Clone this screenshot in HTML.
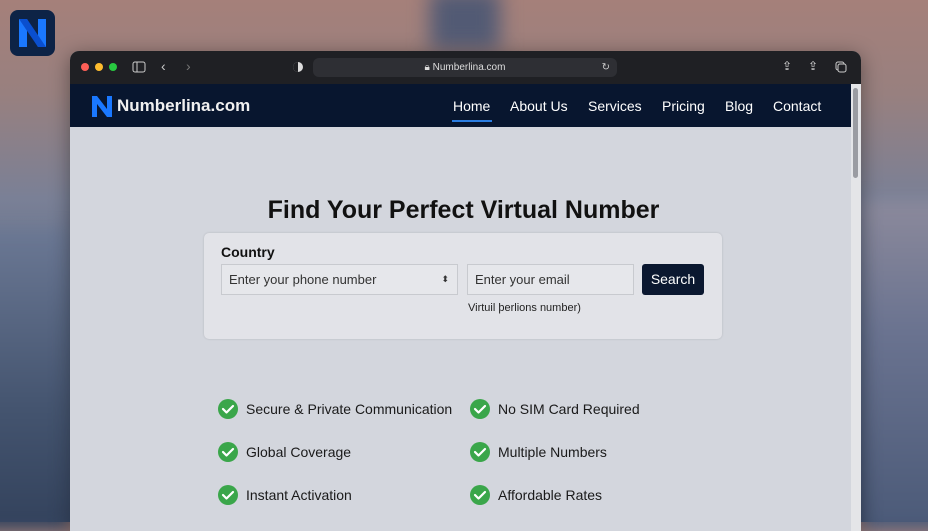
<!DOCTYPE html>
<html><head><meta charset="utf-8"><style>
*{margin:0;padding:0;box-sizing:border-box}
body{width:928px;height:522px;overflow:hidden;position:relative;font-family:"Liberation Sans",sans-serif;
background:linear-gradient(180deg,#a5807a 0%,#98807f 18%,#7a8096 38%,#5d6d8a 60%,#3e4f6e 100%);}
.bgl{position:absolute;left:-20px;top:230px;width:90px;height:300px;background:linear-gradient(180deg,#6b7894,#44546f 60%,#33425c);filter:blur(8px)}
.bgr{position:absolute;left:861px;top:200px;width:90px;height:330px;background:linear-gradient(180deg,#8c8a9c,#6a7390 40%,#4b5a78);filter:blur(8px)}
.tw{position:absolute;left:430px;top:-10px;width:70px;height:60px;background:#525a74;filter:blur(10px)}
.app{position:absolute;left:10px;top:10px;width:45px;height:46px;border-radius:8px;background:#0d2346;}
.win{position:absolute;left:70px;top:51px;width:791px;height:480px;background:#d3d6dd;border-radius:9px 9px 0 0;overflow:hidden;box-shadow:0 4px 20px rgba(0,0,0,.4)}
.tb{height:33px;background:#1f2024;position:relative}
.dot{position:absolute;top:12px;width:8px;height:8px;border-radius:50%}
.url{position:absolute;left:243px;top:7px;width:304px;height:19px;border-radius:6px;background:#2e2f34;color:#ddd;font-size:10px;text-align:center;line-height:19px}
.nav{height:43px;background:#08162f;position:relative;color:#fff}
.nav a{position:absolute;top:14px;font-size:14px;}
.sb{position:absolute;right:0;top:33px;width:10px;height:460px;background:#e4e5e8}
.sb i{position:absolute;left:2px;top:4px;width:5px;height:90px;border-radius:3px;background:#9a9ca2}
h1{position:absolute;left:0;width:787px;text-align:center;top:145px;font-size:25px;color:#111;font-weight:bold}
.card{position:absolute;left:134px;top:182px;width:518px;height:106px;border-radius:5px;background:#e2e3e8;box-shadow:0 0 2px rgba(0,0,0,.15)}
.inp{position:absolute;height:31px;border:1px solid #c8cacf;background:#e6e7eb;font-size:13px;color:#333;line-height:29px;padding-left:7px}
.feat{position:absolute;font-size:14px;color:#1a1a1a}
.ck{position:absolute;width:20px;height:20px;border-radius:50%;background:#3aa64a}
</style></head><body>
<div class="bgl"></div><div class="bgr"></div><div class="tw"></div>
<div class="app"><svg width="45" height="46" viewBox="0 0 45 46"><path d="M9 9h8l11 19V9h8v28h-8L17 18v19H9z" fill="#1a78ff"/><path d="M17 9l19 28h-8L9 9z" fill="#0a4fcf"/></svg></div>
<div class="win">
<div class="tb">
<div class="dot" style="left:11px;background:#fe5f57"></div>
<div class="dot" style="left:25px;background:#febc2e"></div>
<div class="dot" style="left:39px;background:#28c840"></div>
<svg style="position:absolute;left:62px;top:10px" width="14" height="12"><rect x="1" y="1" width="12" height="10" rx="2" fill="none" stroke="#ccc"/><line x1="5" y1="1" x2="5" y2="11" stroke="#ccc"/></svg>
<span style="position:absolute;left:91px;top:7px;color:#ccc;font-size:14px">‹</span>
<span style="position:absolute;left:116px;top:7px;color:#777;font-size:14px">›</span>
<svg style="position:absolute;left:222px;top:10px" width="12" height="12"><circle cx="6" cy="6" r="5" fill="#ddd"/><path d="M6 1a5 5 0 0 0 0 10z" fill="#1f2024"/></svg>
<div class="url">🔒︎ Numberlina.com<span style="position:absolute;right:7px;color:#ccc">↻</span></div>
<span style="position:absolute;left:712px;top:8px;color:#ddd;font-size:12px">⇪</span>
<span style="position:absolute;left:738px;top:8px;color:#ddd;font-size:12px">⇪</span>
<svg style="position:absolute;left:765px;top:10px" width="12" height="12"><rect x="1" y="1" width="8" height="8" rx="2" fill="none" stroke="#ccc"/><rect x="3" y="3" width="8" height="8" rx="2" fill="#1f2024" stroke="#ccc"/></svg>
</div>
<div class="nav">
<svg style="position:absolute;left:22px;top:12px" width="20" height="21" viewBox="0 0 20 21"><path d="M0 0h5l10 13V0h5v21h-5L5 8v13H0z" fill="#1a78ff"/></svg>
<span style="position:absolute;left:47px;top:12px;font-size:17px;font-weight:bold;color:#f0f0f0">Numberlina.com</span>
<a style="left:383px">Home</a><div style="position:absolute;left:382px;top:36px;width:40px;height:2px;background:#2a7de1"></div>
<a style="left:440px">About Us</a><a style="left:518px">Services</a><a style="left:592px">Pricing</a><a style="left:655px">Blog</a><a style="left:703px">Contact</a>
</div>
<div class="sb"><i></i></div>
<h1>Find Your Perfect Virtual Number</h1>
<div class="card">
<div style="position:absolute;left:17px;top:11px;font-size:14px;font-weight:bold;color:#111">Country</div>
<div class="inp" style="left:17px;top:31px;width:237px">Enter your phone number<span style="position:absolute;right:8px;font-size:9px">⬍</span></div>
<div class="inp" style="left:263px;top:31px;width:167px">Enter your email</div>
<div style="position:absolute;left:438px;top:31px;width:62px;height:31px;border-radius:3px;background:#0b1830;color:#fff;font-size:14px;text-align:center;line-height:31px">Search</div>
<div style="position:absolute;left:264px;top:69px;font-size:11px;color:#222">Virtuil þerlions number)</div>
</div>
<div class="ck" style="left:148px;top:348px"></div><div class="feat" style="left:176px;top:350px">Secure &amp; Private Communication</div>
<div class="ck" style="left:400px;top:348px"></div><div class="feat" style="left:428px;top:350px">No SIM Card Required</div>
<div class="ck" style="left:148px;top:391px"></div><div class="feat" style="left:176px;top:393px">Global Coverage</div>
<div class="ck" style="left:400px;top:391px"></div><div class="feat" style="left:428px;top:393px">Multiple Numbers</div>
<div class="ck" style="left:148px;top:434px"></div><div class="feat" style="left:176px;top:436px">Instant Activation</div>
<div class="ck" style="left:400px;top:434px"></div><div class="feat" style="left:428px;top:436px">Affordable Rates</div>
</div>
<svg style="position:absolute;left:0;top:0;pointer-events:none" width="928" height="522">
<defs><path id="c" d="M-5 0l3.5 3.5L5-3" fill="none" stroke="#fff" stroke-width="2.2" stroke-linecap="round" stroke-linejoin="round"/></defs>
<use href="#c" x="228" y="409"/><use href="#c" x="480" y="409"/><use href="#c" x="228" y="452"/><use href="#c" x="480" y="452"/><use href="#c" x="228" y="495"/><use href="#c" x="480" y="495"/>
</svg>
</body></html>
